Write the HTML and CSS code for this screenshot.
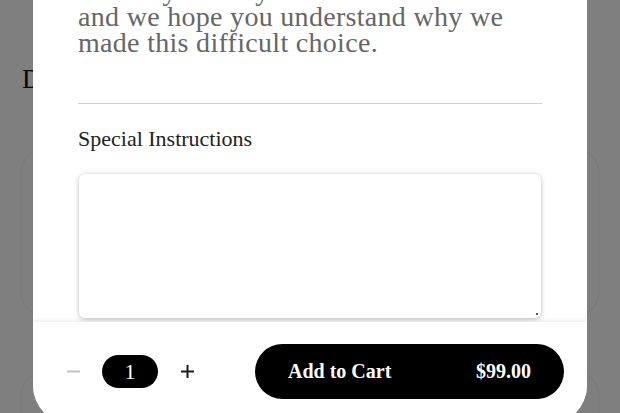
FILE: index.html
```html
<!DOCTYPE html>
<html lang="en">
<head>
    <meta charset="UTF-8">
    <meta name="viewport" content="width=device-width, initial-scale=1.0">
    <title>Product - Special Instructions</title>
    <link rel="stylesheet" href="styles.css">
</head>
<body>
    <div class="page">
        <h2 class="section-title">Drinks</h2>
        <div class="card"></div>
        <div class="card"></div>
    </div>

    <div class="overlay"></div>

    <div class="modal">
        <div class="modal-body">
            <p class="notice">
                We truly thank you all for the love and<br>
                and we hope you understand why we<br>
                made this difficult choice.
            </p>
            <hr class="divider">
            <label class="field-label" for="instructions">Special Instructions</label>
            <div class="textarea-wrap">
                <textarea id="instructions" class="instructions"></textarea>
            </div>
        </div>

        <div class="modal-footer">
            <div class="qty">
                <button class="qty-btn minus" type="button" aria-label="Decrease">
                    <svg width="13" height="13" viewBox="0 0 13 13"><path d="M0 6.5H13" stroke="#c4c4c4" stroke-width="2"/></svg>
                </button>
                <span class="qty-value">1</span>
                <button class="qty-btn plus" type="button" aria-label="Increase">
                    <svg width="13" height="13" viewBox="0 0 13 13"><path d="M0 6.5H13M6.5 0V13" stroke="#1a1a1a" stroke-width="2"/></svg>
                </button>
            </div>
            <button class="add-btn" type="button">
                <span>Add to Cart</span>
                <span>$99.00</span>
            </button>
        </div>
    </div>
</body>
</html>
```

FILE: styles.css
```css
body {
    margin: 0;
    font-family: "Liberation Serif", "Times New Roman", serif;
    background: #fff;
    color: #111;
    overflow: hidden;
}
.page {
    padding: 63px 22px 0;
}
.section-title {
    font-size: 27px;
    font-weight: normal;
    line-height: 32px;
    margin: 0 0 55px;
}
.card {
    height: 165px;
    border-radius: 22px;
    background: #fff;
    box-shadow: 0 0 3px rgba(0, 0, 0, 0.14);
    margin-bottom: 58px;
}
.overlay {
    position: fixed;
    top: 0;
    left: 0;
    right: 0;
    bottom: 0;
    background: rgba(0, 0, 0, 0.5);
}
.modal {
    position: fixed;
    left: 33px;
    right: 33px;
    top: -58px;
    bottom: -12px;
    background: #fff;
    border-radius: 40px;
    display: flex;
    flex-direction: column;
    overflow: hidden;
}
.modal-body {
    flex: 1;
    overflow: hidden;
    padding: 36px 45px 0;
}
.notice {
    margin: 0;
    font-size: 28px;
    letter-spacing: 0.3px;
    line-height: 26px;
    color: #666;
}
.divider {
    border: none;
    border-top: 1px solid #cfcfcf;
    margin: 47px 0 0;
}
.field-label {
    display: block;
    margin-top: 21px;
    font-size: 22px;
    line-height: 28px;
    color: #222;
}
.textarea-wrap {
    position: relative;
    margin: 21px 1px 0;
}
.textarea-wrap::after {
    content: "";
    position: absolute;
    right: 3px;
    bottom: 3px;
    width: 2px;
    height: 2px;
    background: #555;
}
.instructions {
    display: block;
    box-sizing: border-box;
    width: 100%;
    height: 144px;
    border: none;
    border-radius: 6px;
    box-shadow: 0 1px 5px rgba(0, 0, 0, 0.28);
    font-family: inherit;
    font-size: 16px;
    padding: 10px;
    resize: none;
}
.modal-footer {
    display: flex;
    align-items: center;
    padding: 22px 23px 26px 24px;
    background: #fff;
    box-shadow: 0 -2px 4px rgba(0, 0, 0, 0.07);
    position: relative;
}
.qty {
    display: flex;
    align-items: center;
    gap: 13px;
}
.qty-btn {
    width: 32px;
    height: 32px;
    padding: 0;
    border: none;
    background: none;
    display: flex;
    align-items: center;
    justify-content: center;
}
.qty-value {
    width: 56px;
    height: 33px;
    border-radius: 17px;
    background: #000;
    color: #fff;
    font-size: 22px;
    line-height: 33px;
    text-align: center;
}
.add-btn {
    flex: 1;
    margin-left: 52px;
    height: 55px;
    border: none;
    border-radius: 28px;
    background: #000;
    color: #fff;
    font-family: inherit;
    font-size: 20px;
    font-weight: bold;
    display: flex;
    align-items: center;
    justify-content: space-between;
    padding: 0 33px;
}
```
